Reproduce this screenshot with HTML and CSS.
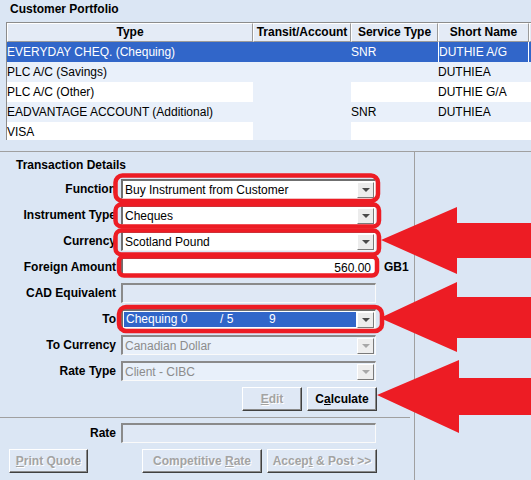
FILE: index.html
```html
<!DOCTYPE html>
<html>
<head>
<meta charset="utf-8">
<link rel="stylesheet" href="styles.css">
</head>
<body>
<div class="app">
  <div class="title">Customer Portfolio</div>
  <div class="grid">
    <div class="row head">
      <div class="hc">Type</div><div class="hc">Transit/Account</div><div class="hc">Service Type</div><div class="hc">Short Name</div><div class="hc"></div>
    </div>
    <div class="row sel">
      <div class="c">EVERYDAY CHEQ. (Chequing)</div><div class="c tr"></div><div class="c">SNR</div><div class="c focus">DUTHIE A/G</div><div class="c"></div>
    </div>
    <div class="row alt">
      <div class="c">PLC A/C (Savings)</div><div class="c tr"></div><div class="c"></div><div class="c">DUTHIEA</div><div class="c"></div>
    </div>
    <div class="row">
      <div class="c">PLC A/C (Other)</div><div class="c tr"></div><div class="c"></div><div class="c">DUTHIE G/A</div><div class="c"></div>
    </div>
    <div class="row alt">
      <div class="c">EADVANTAGE ACCOUNT (Additional)</div><div class="c tr"></div><div class="c">SNR</div><div class="c">DUTHIEA</div><div class="c"></div>
    </div>
    <div class="row">
      <div class="c">VISA</div><div class="c tr"></div><div class="c"></div><div class="c"></div><div class="c"></div>
    </div>
  </div>

  <div class="lower">
    <div class="left">
      <div class="sect">Transaction Details</div>
      <div class="form">
        <div class="lbl">Function</div>
        <div class="field combo"><span class="val">Buy Instrument from Customer</span><span class="drop"><i class="tri"></i></span></div>
        <div></div>

        <div class="lbl">Instrument Type</div>
        <div class="field combo"><span class="val">Cheques</span><span class="drop"><i class="tri"></i></span></div>
        <div></div>

        <div class="lbl">Currency</div>
        <div class="field combo"><span class="val">Scotland Pound</span><span class="drop"><i class="tri"></i></span></div>
        <div></div>

        <div class="lbl">Foreign Amount</div>
        <div class="field num"><span class="val">560.00</span></div>
        <div class="unit">GB1</div>

        <div class="lbl">CAD Equivalent</div>
        <div class="field ro"></div>
        <div></div>

        <div class="lbl">To</div>
        <div class="field combo"><span class="val selv"><span class="p1">Chequing 0</span><span class="p2">/ 5</span><span class="p3">9</span></span><span class="drop"><i class="tri"></i></span></div>
        <div></div>

        <div class="lbl">To Currency</div>
        <div class="field combo dis"><span class="val">Canadian Dollar</span><span class="drop"><i class="tri"></i></span></div>
        <div></div>

        <div class="lbl">Rate Type</div>
        <div class="field combo dis"><span class="val">Client - CIBC</span><span class="drop"><i class="tri"></i></span></div>
        <div></div>
      </div>

      <div class="actions">
        <button class="btn off b-edit"><u>E</u>dit</button>
        <button class="btn b-calc">C<u>a</u>lculate</button>
      </div>

      <div class="sep"></div>

      <div class="form rate">
        <div class="lbl">Rate</div>
        <div class="field ro2"></div>
        <div></div>
      </div>

      <div class="bottom">
        <button class="btn off b-print"><u>P</u>rint Quote</button>
        <button class="btn off b-comp">Competitive <u>R</u>ate</button>
        <button class="btn off b-acc">Accep<u>t</u> &amp; Post &gt;&gt;</button>
      </div>
    </div>
    <div class="right"></div>
  </div>

  <svg class="marks" width="531" height="480" viewBox="0 0 531 480" xmlns="http://www.w3.org/2000/svg">
    <g fill="none" stroke="#ed1c24" stroke-width="4.5">
      <rect x="115.5" y="175.5" width="262.5" height="25.5" rx="7"/>
      <rect x="115.5" y="204.5" width="263.5" height="22" rx="6"/>
      <rect x="115.5" y="230.5" width="263.5" height="24" rx="6"/>
      <rect x="119" y="256.5" width="258" height="19" rx="5"/>
      <rect x="119" y="307" width="263" height="24" rx="7"/>
    </g>
    <g fill="#ed1c24">
      <polygon points="381,240 457,207 457,223 531,223 531,258 457,258 457,274"/>
      <polygon points="380,318 457,282 457,297 531,297 531,338 457,338 457,352"/>
      <polygon points="377,395 459,360 459,378 531,378 531,415 459,415 459,433"/>
    </g>
  </svg>
</div>
</body>
</html>
```

FILE: styles.css
```css
* { box-sizing: border-box; }
html, body { margin: 0; padding: 0; }
body {
  background: #dbe6f4;
  font-family: "Liberation Sans", Arial, sans-serif;
  font-size: 12px;
  color: #000;
  overflow: hidden;
}
.app {
  position: relative;
  width: 531px;
  height: 480px;
  overflow: hidden;
}
.title {
  height: 22px;
  padding: 1px 0 0 10px;
  line-height: 16px;
  font-weight: bold;
}
.grid {
  margin-left: 6px;
  height: 118px;
  overflow: hidden;
  border-top: 1px solid #8c8c8c;
  border-left: 1px solid #8c8c8c;
}
.row {
  display: grid;
  grid-template-columns: 246px 98px 87px 91px 60px;
  height: 20px;
  background: #fff;
}
.row.alt { background: #e9f0fa; }
.row .tr { background: #e9f0fa; }
.row.sel, .row.sel .tr { background: #3166c9; color: #fff; }
.row.head { height: 19px; background: #e4ebf6; }
.hc {
  border-top: 1px solid #fff;
  border-left: 1px solid #fff;
  border-right: 1px solid #9a9a9a;
  border-bottom: 1px solid #9a9a9a;
  font-weight: bold;
  text-align: center;
  line-height: 17px;
  white-space: nowrap;
  overflow: hidden;
}
.c {
  line-height: 20px;
  padding-left: 0;
  white-space: nowrap;
  overflow: hidden;
}
.c.focus { border-left: 1px solid #fff; border-right: 1px solid #fff; }

.lower {
  margin-top: 11px;
  border-top: 1px solid #a0a0a0;
  display: flex;
  height: 329px;
}
.left {
  width: 415px;
  border-right: 1px solid #a0a0a0;
  padding-top: 5px;
}
.sect {
  padding-left: 16px;
  line-height: 16px;
  font-weight: bold;
}
.form {
  margin-top: 6px;
  display: grid;
  grid-template-columns: 116px 255px auto;
  grid-auto-rows: 20px;
  column-gap: 5px;
  row-gap: 6px;
  align-items: center;
}
.lbl {
  text-align: right;
  font-weight: bold;
  white-space: nowrap;
}
.field {
  height: 20px;
  background: #fff;
  border-style: solid;
  border-width: 2px 1px 1px 2px;
  border-color: #6f6f6f #f4f4f4 #f4f4f4 #6f6f6f;
  display: flex;
  align-items: center;
  position: relative;
  line-height: 16px;
}
.field .val {
  flex: 1;
  padding-left: 2px;
  white-space: nowrap;
  overflow: hidden;
}
.field .drop {
  width: 17px;
  height: 16px;
  margin-right: 1px;
  background: #ececec;
  border-style: solid;
  border-width: 1px;
  border-color: #fff #7a7a7a #7a7a7a #fff;
  display: flex;
  align-items: center;
  justify-content: center;
}
.tri {
  width: 0;
  height: 0;
  border-left: 4px solid transparent;
  border-right: 4px solid transparent;
  border-top: 4px solid #4a4a4a;
}
.field.dis { background: #e8f0fa; color: #8c8c8c; border-color: #8a8a8a #fafafa #fafafa #8a8a8a; }
.field.dis .tri { border-top-color: #a8a8a8; }
.field.dis .drop { background: #eeeeee; }
.field.num .val { text-align: right; padding-right: 4px; }
.field.ro { background: #dfe8f5; border-color: #8a8a8a #fafafa #fafafa #8a8a8a; }
.field.ro2 { background: #dfe8f5; border-color: #8a8a8a #fafafa #fafafa #8a8a8a; }
.selv {
  background: #3166c9;
  color: #fff;
  align-self: stretch;
  margin: 1px 1px 1px 1px;
  padding-left: 2px !important;
  line-height: 15px;
  display: flex;
  align-items: center;
}
.p1 { width: 94px; display: inline-block; }
.p2 { width: 49px; display: inline-block; }
.p3 { display: inline-block; }
.unit { font-weight: bold; margin-left: 3px; }

.actions {
  margin-top: 6px;
  display: flex;
  justify-content: flex-end;
  gap: 5px;
  padding-right: 37px;
}
.btn {
  height: 24px;
  font-family: "Liberation Sans", Arial, sans-serif;
  font-size: 12px;
  font-weight: bold;
  color: #000;
  background: #dfe8f5;
  border-style: solid;
  border-width: 1px;
  border-color: #fff #404040 #404040 #fff;
  box-shadow: inset -1px -1px 0 #8a8a8a;
  padding: 0 0 1px 0;
  margin: 0;
}
.btn u { text-decoration: underline; }
.btn.off { color: #a3a3a3; text-shadow: 1px 1px 0 #fff; }
.b-edit { width: 60px; }
.b-calc { width: 70px; }
.sep {
  margin-top: 6px;
  margin-right: 4px;
  border-top: 1px solid #a0a0a0;
}
.form.rate { margin-top: 5px; }
.bottom {
  margin-top: 6px;
  display: flex;
  padding-left: 9px;
}
.b-print { width: 79px; }
.b-comp { width: 120px; margin-left: 54px; }
.b-acc { width: 110px; margin-left: 5px; }
.right { flex: 1; }

.marks {
  position: absolute;
  left: 0;
  top: 0;
  pointer-events: none;
}
```
